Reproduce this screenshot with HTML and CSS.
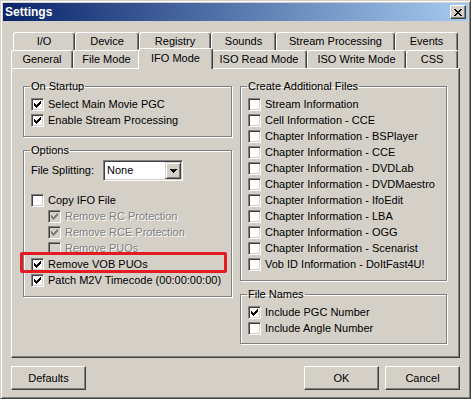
FILE: index.html
```html
<!DOCTYPE html>
<html lang="en">
<head>
    <meta charset="UTF-8">
    <title>Settings</title>
    <link rel="stylesheet" href="styles.css">
</head>
<body>

<svg class="defs" width="0" height="0">
    <symbol id="chk" viewBox="0 0 7 7">
        <path d="M6 0h1v1H6zM5 1h2v1H5zM0 2h1v1H0zM4 2h3v1H4zM0 3h2v1H0zM3 3h3v1H3zM0 4h5v1H0zM1 5h3v1H1zM2 6h1v1H2z"/>
    </symbol>
</svg>

<article class="window">
    <header class="titlebar">
        <span class="title">Settings</span>
        <button class="close">
            <svg width="8" height="7" viewBox="0 0 8 7" shape-rendering="crispEdges">
                <path d="M0 0h2v1H0zM6 0h2v1H6zM1 1h2v1H1zM5 1h2v1H5zM2 2h4v1H2zM3 3h2v1H3zM2 4h4v1H2zM1 5h2v1H1zM5 5h2v1H5zM0 6h2v1H0zM6 6h2v1H6z"/>
            </svg>
        </button>
    </header>

    <div class="client">
        <nav class="tabs">
            <div class="tab-row back">
                <div class="tab t-io">I/O</div>
                <div class="tab t-device">Device</div>
                <div class="tab t-registry">Registry</div>
                <div class="tab t-sounds">Sounds</div>
                <div class="tab t-stream">Stream Processing</div>
                <div class="tab t-events">Events</div>
            </div>
            <div class="tab-row front">
                <div class="tab t-general">General</div>
                <div class="tab t-filemode">File Mode</div>
                <div class="tab t-ifo active">IFO Mode</div>
                <div class="tab t-isoread">ISO Read Mode</div>
                <div class="tab t-isowrite">ISO Write Mode</div>
                <div class="tab t-css">CSS</div>
            </div>
        </nav>

        <section class="panel">
            <div class="col">
                <fieldset class="group">
                    <legend>On Startup</legend>
                    <div class="check"><span class="box"><svg class="mark"><use href="#chk"/></svg></span>Select Main Movie PGC</div>
                    <div class="check"><span class="box"><svg class="mark"><use href="#chk"/></svg></span>Enable Stream Processing</div>
                </fieldset>

                <fieldset class="group options">
                    <legend>Options</legend>
                    <div class="field">
                        <span class="field-label">File Splitting:</span>
                        <div class="combo">
                            <span class="combo-value">None</span>
                            <span class="combo-btn">
                                <svg width="7" height="4" viewBox="0 0 7 4" shape-rendering="crispEdges">
                                    <path d="M0 0h7v1H0zM1 1h5v1H1zM2 2h3v1H2zM3 3h1v1H3z"/>
                                </svg>
                            </span>
                        </div>
                    </div>
                    <div class="checks">
                        <div class="check"><span class="box"></span>Copy IFO File</div>
                        <div class="check sub disabled"><span class="box"><svg class="mark"><use href="#chk"/></svg></span>Remove RC Protection</div>
                        <div class="check sub disabled"><span class="box"><svg class="mark"><use href="#chk"/></svg></span>Remove RCE Protection</div>
                        <div class="check sub disabled"><span class="box"></span>Remove PUOs</div>
                        <div class="check marked"><span class="box"><svg class="mark"><use href="#chk"/></svg></span>Remove VOB PUOs<span class="highlight"></span></div>
                        <div class="check"><span class="box"><svg class="mark"><use href="#chk"/></svg></span>Patch M2V Timecode (00:00:00:00)</div>
                    </div>
                </fieldset>
            </div>

            <div class="col">
                <fieldset class="group">
                    <legend>Create Additional Files</legend>
                    <div class="check"><span class="box"></span>Stream Information</div>
                    <div class="check"><span class="box"></span>Cell Information - CCE</div>
                    <div class="check"><span class="box"></span>Chapter Information - BSPlayer</div>
                    <div class="check"><span class="box"></span>Chapter Information - CCE</div>
                    <div class="check"><span class="box"></span>Chapter Information - DVDLab</div>
                    <div class="check"><span class="box"></span>Chapter Information - DVDMaestro</div>
                    <div class="check"><span class="box"></span>Chapter Information - IfoEdit</div>
                    <div class="check"><span class="box"></span>Chapter Information - LBA</div>
                    <div class="check"><span class="box"></span>Chapter Information - OGG</div>
                    <div class="check"><span class="box"></span>Chapter Information - Scenarist</div>
                    <div class="check"><span class="box"></span>Vob ID Information - DoItFast4U!</div>
                </fieldset>

                <fieldset class="group names">
                    <legend>File Names</legend>
                    <div class="check"><span class="box"><svg class="mark"><use href="#chk"/></svg></span>Include PGC Number</div>
                    <div class="check"><span class="box"></span>Include Angle Number</div>
                </fieldset>
            </div>
        </section>

        <footer class="buttons">
            <button class="btn">Defaults</button>
            <button class="btn push">OK</button>
            <button class="btn">Cancel</button>
        </footer>
    </div>
</article>

</body>
</html>
```

FILE: styles.css
```css
body {
    margin: 0;
    padding: 0;
    background-color: #D4D0C8;
    font-family: "Liberation Sans", Arial, sans-serif;
    font-size: 11px;
    line-height: 13px;
    color: #000000;
}

.defs {
    position: absolute;
}

.window {
    box-sizing: border-box;
    display: flex;
    flex-direction: column;
    width: 471px;
    height: 399px;
    padding: 2px;
    border: 1px solid;
    border-color: #D4D0C8 #404040 #404040 #D4D0C8;
    box-shadow: inset 1px 1px #FFFFFF, inset -1px -1px #808080;
    background-color: #D4D0C8;
}

/* title bar */

.titlebar {
    display: flex;
    justify-content: space-between;
    align-items: center;
    height: 18px;
    padding: 0 2px;
    background: linear-gradient(to right, #0A246A, #A6CAF0);
    color: #FFFFFF;
}

.title {
    font-weight: bold;
    font-size: 12px;
}

.close {
    box-sizing: border-box;
    display: flex;
    justify-content: center;
    align-items: center;
    width: 16px;
    height: 14px;
    padding: 0;
    border: 1px solid;
    border-color: #FFFFFF #404040 #404040 #FFFFFF;
    box-shadow: inset -1px -1px #808080;
    background-color: #D4D0C8;
}

/* tabs */

.client {
    display: flex;
    flex-direction: column;
    flex: 1;
    padding: 11px 8px 6px;
}

.tab-row {
    display: flex;
    height: 18px;
}

.tab-row.back {
    padding-left: 2px;
}

.tab {
    box-sizing: border-box;
    flex: none;
    height: 18px;
    border: 1px solid;
    border-bottom: 0;
    border-color: #FFFFFF #404040 transparent #FFFFFF;
    border-radius: 3px 3px 0 0;
    box-shadow: inset -1px 0 #808080;
    background-color: #D4D0C8;
    text-align: center;
    line-height: 16px;
    white-space: nowrap;
}

.tab.active {
    position: relative;
    z-index: 1;
    height: 21px;
    margin: -2px -2px 0;
    line-height: 18px;
}

.t-io { width: 62px; }
.t-device { width: 64px; }
.t-registry { width: 72px; }
.t-sounds { width: 65px; }
.t-stream { width: 119px; }
.t-events { width: 63px; }

.t-general { width: 62px; }
.t-filemode { width: 67px; }
.t-ifo { width: 75px; }
.t-isoread { width: 96px; }
.t-isowrite { width: 99px; }
.t-css { width: 52px; }

/* panel */

.panel {
    box-sizing: border-box;
    display: grid;
    grid-template-columns: 209px 207px;
    column-gap: 8px;
    align-items: start;
    height: 290px;
    padding: 11px 11px 0;
    border: 1px solid;
    border-color: #FFFFFF #404040 #404040 #FFFFFF;
    box-shadow: inset -1px -1px #808080;
}

.col {
    display: flex;
    flex-direction: column;
}

.group {
    min-width: 0;
    margin: 0;
    padding: 3px 7px 8px;
    border: 1px solid #808080;
    box-shadow: 1px 1px #FFFFFF, inset 1px 1px #FFFFFF;
}

.group legend {
    margin-left: -1px;
    padding: 0 1px;
    line-height: 13px;
}

.group.options {
    margin-top: 7px;
}

.group.names {
    margin-top: 7px;
    padding-bottom: 7px;
}

.check {
    display: flex;
    align-items: center;
    gap: 4px;
    height: 16px;
    white-space: nowrap;
}

.check.sub {
    padding-left: 17px;
}

.check.disabled {
    color: #808080;
    text-shadow: 1px 1px #FFFFFF;
}

.box {
    box-sizing: border-box;
    flex: none;
    width: 13px;
    height: 13px;
    padding: 2px;
    border: 1px solid;
    border-color: #808080 #FFFFFF #FFFFFF #808080;
    box-shadow: inset 1px 1px #404040, inset -1px -1px #D4D0C8;
    background-color: #FFFFFF;
}

.mark {
    display: block;
    width: 7px;
    height: 7px;
    fill: #000000;
    shape-rendering: crispEdges;
}

.check.disabled .box {
    background-color: #D4D0C8;
}

.check.disabled .mark {
    fill: #808080;
}

.check.marked {
    position: relative;
}

.highlight {
    position: absolute;
    left: -11px;
    top: -4px;
    box-sizing: border-box;
    width: 207px;
    height: 21px;
    border: 3px solid #E31B23;
    border-radius: 2px;
}

.field {
    display: flex;
    align-items: center;
    height: 21px;
}

.field-label {
    width: 72px;
}

.combo {
    box-sizing: border-box;
    display: flex;
    width: 80px;
    height: 21px;
    padding: 1px;
    border: 1px solid;
    border-color: #808080 #FFFFFF #FFFFFF #808080;
    box-shadow: inset 1px 1px #404040, inset -1px -1px #D4D0C8;
    background-color: #FFFFFF;
}

.combo-value {
    flex: 1;
    padding-left: 2px;
    line-height: 17px;
}

.combo-btn {
    box-sizing: border-box;
    display: flex;
    justify-content: center;
    align-items: center;
    width: 16px;
    border: 1px solid;
    border-color: #D4D0C8 #404040 #404040 #D4D0C8;
    box-shadow: inset 1px 1px #FFFFFF, inset -1px -1px #808080;
    background-color: #D4D0C8;
}

.checks {
    margin-top: 11px;
}

/* buttons */

.buttons {
    display: flex;
    gap: 6px;
    margin-top: 8px;
}

.btn {
    box-sizing: border-box;
    width: 75px;
    height: 24px;
    padding: 0;
    border: 1px solid;
    border-color: #FFFFFF #404040 #404040 #FFFFFF;
    box-shadow: inset -1px -1px #808080;
    background-color: #D4D0C8;
    font: inherit;
    color: #000000;
}

.btn.push {
    margin-left: auto;
}
```
